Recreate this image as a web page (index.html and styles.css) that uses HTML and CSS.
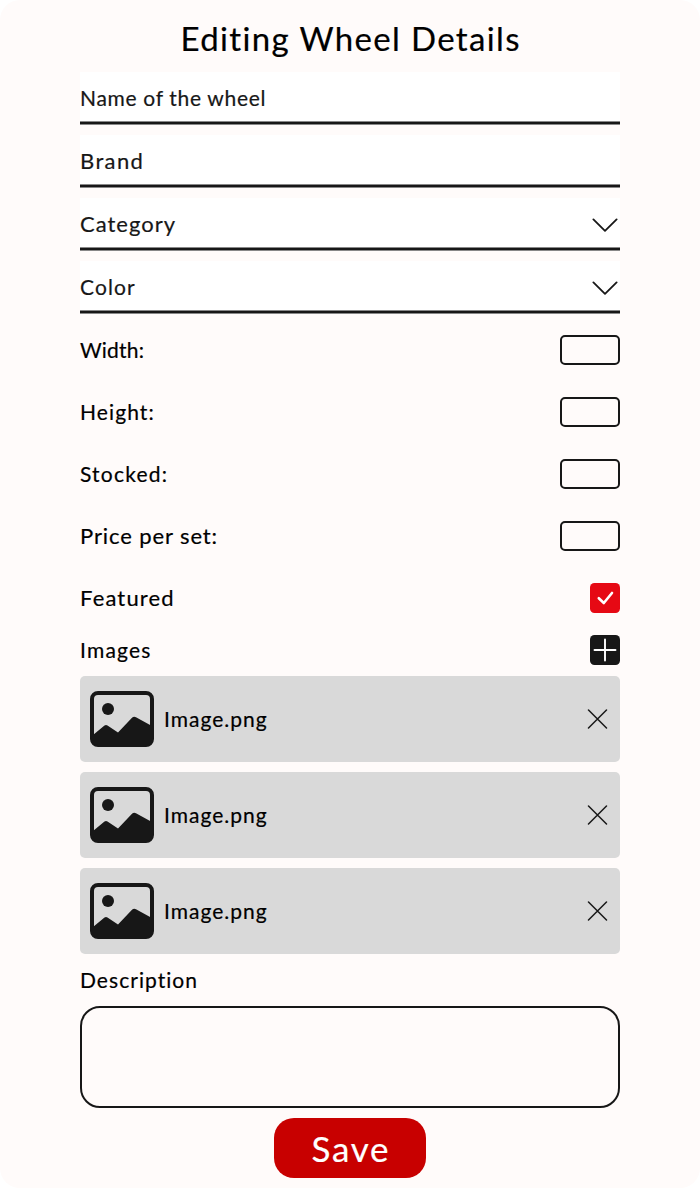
FILE: index.html
```
<!DOCTYPE html>
<html lang="en">
<head>
<meta charset="utf-8">
<title>Editing Wheel Details</title>
<link rel="stylesheet" href="styles.css">
</head>
<body>
<svg class="defs" aria-hidden="true">
  <symbol id="chevron" viewBox="0 0 26 14"><path d="M1.4 1.4 13 12.8 24.6 1.4" fill="none" stroke="#171717" stroke-width="1.8" stroke-linecap="round" stroke-linejoin="round"/></symbol>
  <symbol id="close" viewBox="0 0 20 20"><path d="M1 1 19 19M19 1 1 19" fill="none" stroke="#171717" stroke-width="1.5" stroke-linecap="round"/></symbol>
  <symbol id="picture" viewBox="0 0 64 56">
    <rect x="2" y="2" width="60" height="52" rx="6" fill="none" stroke="#171717" stroke-width="4"/>
    <circle cx="18" cy="18" r="6" fill="#171717"/>
    <path d="M3 44 14.5 34.6Q16 33.4 17.5 34.6L28 41.6 42 26.8Q43.8 25 46 26.2L61 34.5V49Q61 54 56 54H8Q3 54 3 49Z" fill="#171717"/>
  </symbol>
</svg>
<main class="card">
  <h1 class="title"><span class="t-title">Editing Wheel Details</span></h1>
  <div class="field"><span class="t-name">Name of the wheel</span></div>
  <div class="field"><span class="t-brand">Brand</span></div>
  <div class="field"><span class="t-category">Category</span><svg class="chevron"><use href="#chevron"/></svg></div>
  <div class="field"><span class="t-color">Color</span><svg class="chevron"><use href="#chevron"/></svg></div>
  <div class="row"><span class="t-width">Width:</span><span class="box"></span></div>
  <div class="row"><span class="t-height">Height:</span><span class="box"></span></div>
  <div class="row"><span class="t-stocked">Stocked:</span><span class="box"></span></div>
  <div class="row"><span class="t-price">Price per set:</span><span class="box"></span></div>
  <div class="row"><span class="t-featured">Featured</span>
    <svg class="tile" viewBox="0 0 30 30"><rect width="30" height="30" rx="4.5" fill="#e60914"/><path d="M8.8 15.2 13.8 20 22 10" fill="none" stroke="#fff" stroke-width="2.6" stroke-linecap="round" stroke-linejoin="round"/></svg></div>
  <div class="row heading"><span class="t-images">Images</span>
    <svg class="tile" viewBox="0 0 30 30"><rect width="30" height="30" rx="4.5" fill="#171717"/><path d="M15 4.5V25.5M4.5 15H25.5" fill="none" stroke="#fff" stroke-width="1.9" stroke-linecap="round"/></svg></div>
  <div class="file"><svg class="picture"><use href="#picture"/></svg><span class="t-file">Image.png</span><svg class="close"><use href="#close"/></svg></div>
  <div class="file"><svg class="picture"><use href="#picture"/></svg><span class="t-file">Image.png</span><svg class="close"><use href="#close"/></svg></div>
  <div class="file"><svg class="picture"><use href="#picture"/></svg><span class="t-file">Image.png</span><svg class="close"><use href="#close"/></svg></div>
  <div class="row heading"><span class="t-description">Description</span></div>
  <div class="description"></div>
  <button class="save"><span class="t-save">Save</span></button>
</main>
</body>
</html>
```
FILE: styles.css
```
* { box-sizing: border-box; }
body { margin: 0; background: #fff; font: 21px/26px Lato, sans-serif; color: #000; -webkit-text-stroke: .2px; }
.defs { display: none; }
.card { display: flex; flex-direction: column; gap: 10px; height: 1188px; padding: 10px 80px; border-radius: 20px; background: #fffbfa; }
.title { display: flex; align-items: center; justify-content: center; height: 52px; margin: 0; padding-top: 3px; font-size: 33px; font-weight: 400; white-space: nowrap; }
.field { display: flex; align-items: center; justify-content: space-between; height: 53px; color: #171717;
  background: linear-gradient(#888 0 1px, #171717 1px 3px, #888 3px 4px) bottom / 100% 4px no-repeat, #fff; }
.field span { padding-bottom: 1px; }
.row { display: flex; align-items: center; justify-content: space-between; height: 52px; }
.row span:first-child { padding-bottom: 1px; }
.heading { height: 32px; }
.chevron { width: 26px; height: 14px; margin-right: 2px; }
.box { width: 60px; height: 30px; border: 2px solid #171717; border-radius: 5px; }
.tile { width: 30px; height: 30px; }
.file { display: flex; align-items: center; gap: 10px; height: 86px; padding: 0 12px 0 10px; border-radius: 5px; background: #d9d9d9; }
.picture { width: 64px; height: 56px; }
.close { width: 21px; height: 20px; margin-left: auto; }
.description { height: 102px; border: 2px solid #171717; border-radius: 20px; }
.save { align-self: center; width: 152px; height: 60px; padding: 0; border: 0; border-radius: 20px; background: #c80000; color: #fff; font: 35px/40px Lato, sans-serif; }
.t-title { letter-spacing: 1.35px; margin-right: -1.35px; }
.t-name { letter-spacing: .68px; }
.t-brand { font-size: 22px; letter-spacing: 1.4px; }
.t-category { font-size: 22px; letter-spacing: 1px; }
.t-color { letter-spacing: 1.1px; }
.t-width { letter-spacing: .2px; }
.t-height { letter-spacing: 1.1px; }
.t-stocked { letter-spacing: 1.2px; }
.t-price { font-size: 22px; letter-spacing: .9px; }
.t-featured { font-size: 22px; letter-spacing: 1.15px; }
.t-images { letter-spacing: 1.2px; }
.t-file { letter-spacing: 1px; }
.t-description { letter-spacing: 1.05px; }
.t-save { letter-spacing: 1.8px; margin-right: -1.8px; }
```
